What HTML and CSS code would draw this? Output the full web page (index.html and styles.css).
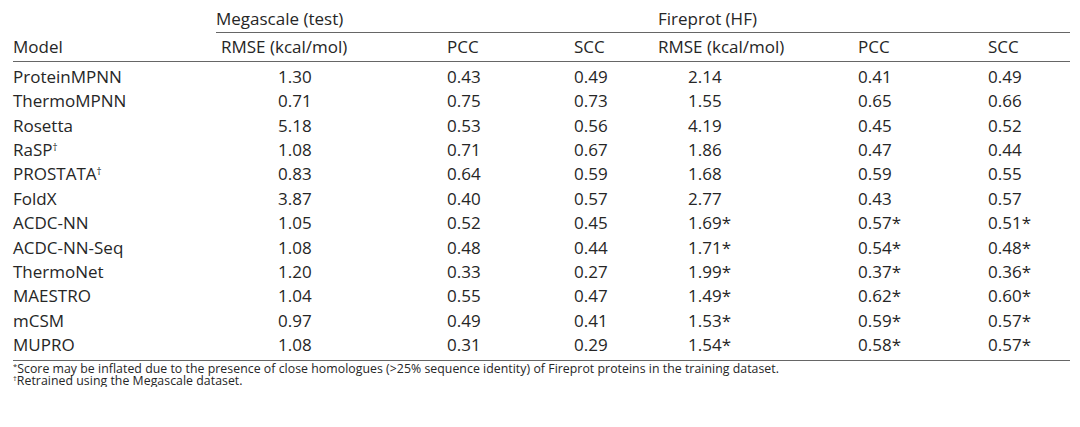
FILE: index.html
```html
<!DOCTYPE html>
<html lang="en">
<head>
<meta charset="utf-8">
<title>Benchmark table</title>
<link rel="stylesheet" href="styles.css">
</head>
<body>
<div class="wrap">
<table class="results">
  <colgroup>
    <col class="c-model"><col class="c-rmse1"><col class="c-pcc1"><col class="c-scc1"><col class="c-rmse2"><col class="c-pcc2"><col class="c-scc2">
  </colgroup>
  <thead>
    <tr class="group-row">
      <th class="blank"></th>
      <th colspan="3" class="group g-mega">Megascale (test)</th>
      <th colspan="3" class="group g-fire">Fireprot (HF)</th>
    </tr>
    <tr class="head-row">
      <th class="model">Model</th>
      <th class="h-rmse1">RMSE (kcal/mol)</th>
      <th>PCC</th>
      <th>SCC</th>
      <th>RMSE (kcal/mol)</th>
      <th>PCC</th>
      <th>SCC</th>
    </tr>
  </thead>
  <tbody>
    <tr><td>ProteinMPNN</td><td class="v-rmse1">1.30</td><td>0.43</td><td>0.49</td><td class="v-rmse2">2.14</td><td>0.41</td><td>0.49</td></tr>
    <tr><td>ThermoMPNN</td><td class="v-rmse1">0.71</td><td>0.75</td><td>0.73</td><td class="v-rmse2">1.55</td><td>0.65</td><td>0.66</td></tr>
    <tr><td>Rosetta</td><td class="v-rmse1">5.18</td><td>0.53</td><td>0.56</td><td class="v-rmse2">4.19</td><td>0.45</td><td>0.52</td></tr>
    <tr><td>RaSP<sup>†</sup></td><td class="v-rmse1">1.08</td><td>0.71</td><td>0.67</td><td class="v-rmse2">1.86</td><td>0.47</td><td>0.44</td></tr>
    <tr><td>PROSTATA<sup>†</sup></td><td class="v-rmse1">0.83</td><td>0.64</td><td>0.59</td><td class="v-rmse2">1.68</td><td>0.59</td><td>0.55</td></tr>
    <tr><td>FoldX</td><td class="v-rmse1">3.87</td><td>0.40</td><td>0.57</td><td class="v-rmse2">2.77</td><td>0.43</td><td>0.57</td></tr>
    <tr><td>ACDC-NN</td><td class="v-rmse1">1.05</td><td>0.52</td><td>0.45</td><td class="v-rmse2">1.69*</td><td>0.57*</td><td>0.51*</td></tr>
    <tr><td>ACDC-NN-Seq</td><td class="v-rmse1">1.08</td><td>0.48</td><td>0.44</td><td class="v-rmse2">1.71*</td><td>0.54*</td><td>0.48*</td></tr>
    <tr><td>ThermoNet</td><td class="v-rmse1">1.20</td><td>0.33</td><td>0.27</td><td class="v-rmse2">1.99*</td><td>0.37*</td><td>0.36*</td></tr>
    <tr><td>MAESTRO</td><td class="v-rmse1">1.04</td><td>0.55</td><td>0.47</td><td class="v-rmse2">1.49*</td><td>0.62*</td><td>0.60*</td></tr>
    <tr><td>mCSM</td><td class="v-rmse1">0.97</td><td>0.49</td><td>0.41</td><td class="v-rmse2">1.53*</td><td>0.59*</td><td>0.57*</td></tr>
    <tr><td>MUPRO</td><td class="v-rmse1">1.08</td><td>0.31</td><td>0.29</td><td class="v-rmse2">1.54*</td><td>0.58*</td><td>0.57*</td></tr>
  </tbody>
</table>
<div class="notes">
  <p><sup>*</sup>Score may be inflated due to the presence of close homologues (&gt;25% sequence identity) of Fireprot proteins in the training dataset.</p>
  <p><sup>†</sup>Retrained using the Megascale dataset.</p>
</div>
</div>
</body>
</html>
```

FILE: styles.css
```css
html, body {
  margin: 0;
  padding: 0;
  background: #ffffff;
}

body {
  font-family: "Open Sans", "Noto Sans", "DejaVu Sans", sans-serif;
  color: #262626;
}

.wrap {
  padding-left: 13px;
  width: 1057px;
}

.results {
  border-collapse: collapse;
  table-layout: fixed;
  width: 1057px;
  font-size: 17px;
  line-height: 24.4px;
}

.c-model { width: 203px; }
.c-rmse1 { width: 231px; }
.c-pcc1 { width: 127px; }
.c-scc1 { width: 84px; }
.c-rmse2 { width: 200px; }
.c-pcc2 { width: 130px; }
.c-scc2 { width: 82px; }

.results th,
.results td {
  padding: 0;
  text-align: left;
  font-weight: 400;
  white-space: nowrap;
}

.group-row th {
  padding-top: 7px;
  padding-bottom: 1px;
}

.group {
  border-bottom: 1px solid #666666;
}

.g-mega { padding-left: 134px; }
.g-fire { padding-left: 162px; }

.head-row th {
  padding-top: 2px;
  padding-bottom: 1px;
  border-bottom: 1px solid #666666;
}

.h-rmse1 { padding-left: 5px !important; }

.v-rmse1 { padding-left: 62px !important; }
.v-rmse2 { padding-left: 30px !important; }

tbody tr:first-child td { padding-top: 3px; }
tbody tr:last-child td {
  padding-bottom: 2px;
  border-bottom: 1px solid #666666;
}

.results sup {
  font-size: 10px;
  line-height: 0;
  vertical-align: 0.55em;
}

.notes {
  padding-top: 2px;
  font-size: 12.3px;
  line-height: 12.3px;
  letter-spacing: 0.04px;
}

.notes p {
  margin: 0;
}

.notes sup {
  font-size: 7.5px;
  line-height: 0;
  vertical-align: 0.5em;
}
```
